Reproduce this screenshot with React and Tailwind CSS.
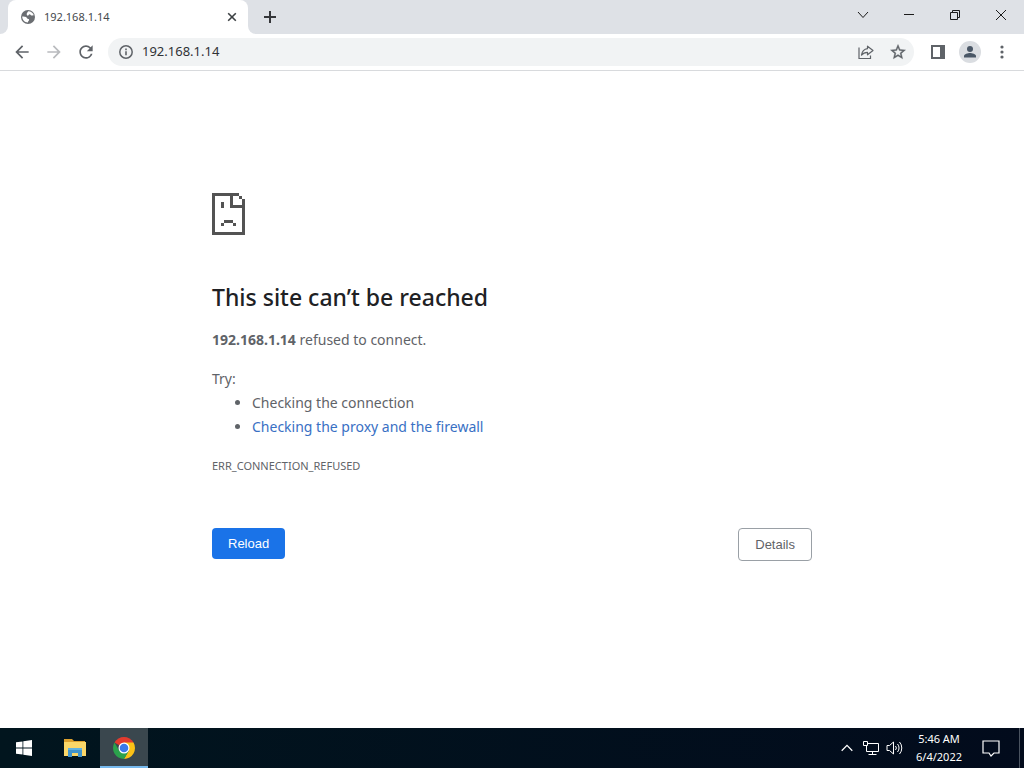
import React from "react";

const iconButton =
  "flex h-8 w-8 shrink-0 items-center justify-center text-[#5f6368]";
const windowButton =
  "flex h-[30px] w-[46px] shrink-0 items-center justify-center text-[#1b1b1b]";

function ToolIcon({ d, size = 20, className = "" }) {
  return (
    <svg width={size} height={size} viewBox="0 0 24 24" fill="currentColor" className={className} aria-hidden="true">
      <path d={d} />
    </svg>
  );
}

function TabStrip() {
  return (
    <header className="flex h-[34px] items-start bg-[#dee1e6]">
      <div className="w-2 self-stretch bg-white">
        <div className="h-full rounded-br-lg bg-[#dee1e6]" />
      </div>
      <div className="flex h-[34px] w-60 items-center rounded-t-lg bg-white pl-3 pr-2">
        <svg width="16" height="16" viewBox="0 0 16 16" aria-hidden="true">
          <circle cx="8" cy="8" r="7" fill="#6b6e72" />
          <path d="M8.200 2.200c2.800 0 5 1.800 5.700 4.200-.9-.4-1.700.3-2.500.1-.9-.2-.9-1.200-1.800-1.200-1 0-.6 1.100-1.500 1.300-.9.200-1.300-.5-1.400-1.300-.1-1.300.9-2 1.500-3.100zM2.200 7.600c1.300-.2 3 0 3.900.5.900.5.500 1.300 1.500 1.600.9.300 1.500.1 1.500 1 0 1-1.100 1.200-1.200 2.900-3.300 0-5.700-2.800-5.700-6z" fill="#fff" />
        </svg>
        <span className="ml-2 flex-1 font-['Noto_Sans',sans-serif] text-[11px] text-[#45494d]">192.168.1.14</span>
        <button type="button" aria-label="Close tab" className="flex h-4 w-4 items-center justify-center text-[#3c4043]">
          <svg width="10" height="10" viewBox="0 0 10 10" stroke="currentColor" strokeWidth="1.600" aria-hidden="true">
            <path d="M1.200 1.200l7.600 7.600M8.800 1.200L1.200 8.800" />
          </svg>
        </button>
      </div>
      <div className="w-2 self-stretch bg-white">
        <div className="h-full rounded-bl-lg bg-[#dee1e6]" />
      </div>
      <button type="button" aria-label="New tab" className="flex h-[34px] w-7 items-center justify-center text-[#35363a]">
        <svg width="12" height="12" viewBox="0 0 12 12" stroke="currentColor" strokeWidth="2" aria-hidden="true">
          <path d="M6 0v12M0 6h12" />
        </svg>
      </button>
      <div className="ml-auto flex">
        <button type="button" aria-label="Search tabs" className={windowButton}>
          <svg width="12" height="12" viewBox="0 0 12 12" fill="none" stroke="currentColor" aria-hidden="true">
            <path d="M1 3l5 5.500L11 3" />
          </svg>
        </button>
        <button type="button" aria-label="Minimize" className={windowButton}>
          <svg width="10" height="10" viewBox="0 0 10 10" stroke="currentColor" aria-hidden="true">
            <path d="M0 4.500h10" />
          </svg>
        </button>
        <button type="button" aria-label="Restore" className={windowButton}>
          <svg width="10" height="10" viewBox="0 0 10 10" fill="none" stroke="currentColor" aria-hidden="true">
            <path d="M.5 2.500h7v7h-7zM2.500 2.500v-2h7v7h-2" />
          </svg>
        </button>
        <button type="button" aria-label="Close" className={windowButton}>
          <svg width="10" height="10" viewBox="0 0 10 10" stroke="currentColor" aria-hidden="true">
            <path d="M0 0l10 10M10 0L0 10" />
          </svg>
        </button>
      </div>
    </header>
  );
}

function Toolbar() {
  return (
    <nav className="flex h-[37px] items-center border-b border-[#d8dadd] bg-white px-1.5">
      <button type="button" aria-label="Back" className={iconButton}>
        <ToolIcon d="M20 11H7.830l5.590-5.590L12 4l-8 8 8 8 1.410-1.410L7.830 13H20v-2z" />
      </button>
      <button type="button" aria-label="Forward" className={iconButton}>
        <ToolIcon className="text-[#b9bbbe]" d="M12 4l-1.410 1.410L16.170 11H4v2h12.170l-5.580 5.590L12 20l8-8z" />
      </button>
      <button type="button" aria-label="Reload" className={iconButton}>
        <ToolIcon d="M17.650 6.350A7.958 7.958 0 0 0 12 4c-4.420 0-7.990 3.580-7.990 8s3.570 8 7.990 8c3.730 0 6.840-2.550 7.730-6h-2.080A5.990 5.990 0 0 1 12 18c-3.310 0-6-2.690-6-6s2.690-6 6-6c1.660 0 3.140.69 4.220 1.780L13 11h7V4l-2.350 2.350z" />
      </button>
      <div className="ml-1.5 flex h-7 min-w-0 flex-1 items-center rounded-full bg-[#f1f3f4] pl-2.5">
        <svg width="16" height="16" viewBox="0 0 16 16" aria-hidden="true">
          <circle cx="8" cy="8" r="6.200" fill="none" stroke="#5f6368" strokeWidth="1.500" />
          <path d="M7.200 7.200h1.600v4H7.200zM7.200 4.600h1.600v1.600H7.200z" fill="#5f6368" />
        </svg>
        <input
          type="text"
          aria-label="Address"
          defaultValue="192.168.1.14"
          className="ml-2 min-w-0 flex-1 bg-transparent font-['Noto_Sans',sans-serif] text-[13px] text-[#303236] outline-none"
        />
        <button type="button" aria-label="Share this page" className={iconButton}>
          <svg width="18" height="18" viewBox="0 0 18 18" fill="none" stroke="currentColor" strokeWidth="1.200" aria-hidden="true">
            <path d="M2 4.500v11h11.500v-3" />
            <path d="M10.500 3.200L16 7.500l-5.500 4.300V9.300c-2.800 0-4.500.8-6 2.900.5-3.500 2.300-6 6-6.500z" strokeLinejoin="round" />
          </svg>
        </button>
        <button type="button" aria-label="Bookmark this tab" className={iconButton}>
          <svg width="18" height="18" viewBox="0 0 24 24" fill="currentColor" stroke="currentColor" strokeWidth=".5" aria-hidden="true">
            <path d="M22 9.240l-7.190-.62L12 2 9.190 8.630 2 9.240l5.460 4.730L5.820 21 12 17.270 18.180 21l-1.630-7.030L22 9.240zM12 15.400l-3.760 2.270 1-4.280-3.320-2.880 4.380-.38L12 6.100l1.710 4.040 4.380.38-3.320 2.880 1 4.280L12 15.400z" />
          </svg>
        </button>
      </div>
      <button type="button" aria-label="Side panel" className={`ml-2 ${iconButton}`}>
        <svg width="14" height="14" viewBox="0 0 14 14" aria-hidden="true">
          <path d="M1 1h12v12H1z" fill="none" stroke="currentColor" strokeWidth="2" />
          <path d="M9 0h5v14H9z" fill="currentColor" />
        </svg>
      </button>
      <button type="button" aria-label="Profile" className={iconButton}>
        <svg width="22" height="22" viewBox="0 0 22 22" aria-hidden="true">
          <circle cx="11" cy="11" r="11" fill="#dadde1" />
          <circle cx="11" cy="8" r="3" fill="#4a5766" />
          <path d="M5 16.500V15c0-2 4-3 6-3s6 1 6 3v1.500z" fill="#4a5766" />
        </svg>
      </button>
      <button type="button" aria-label="Menu" className={iconButton}>
        <svg width="4" height="14" viewBox="0 0 4 14" fill="currentColor" aria-hidden="true">
          <circle cx="2" cy="2" r="1.600" />
          <circle cx="2" cy="7" r="1.600" />
          <circle cx="2" cy="12" r="1.600" />
        </svg>
      </button>
    </nav>
  );
}

function ErrorPage() {
  return (
    <main className="flex-1 bg-white px-6 font-['Noto_Sans',sans-serif] text-[14px] leading-6 text-[#5f6368]">
      <div className="mx-auto max-w-[600px] pt-[122px]">
        <svg width="33" height="42" viewBox="0 0 11 14" fill="#535353" shapeRendering="crispEdges" aria-hidden="true">
          <path d="M0 0h9v1H7v3h3V2h1v12H0zM1 1v12h9V5H6V1z" fillRule="evenodd" />
          <path d="M9 1h1v1H9zM3 3h1v2H3zM4 9h3v1H4zM3 10h1v1H3zM7 10h1v1H7z" />
        </svg>
        <h1 className="mt-[46px] text-[23px] font-medium leading-8 text-[#202124]">This site can’t be reached</h1>
        <p className="mt-[15px]">
          <strong className="font-bold">192.168.1.14</strong> refused to connect.
        </p>
        <p className="mt-[15px]">Try:</p>
        <ul className="list-disc pl-10">
          <li>Checking the connection</li>
          <li>
            <a href="#proxy" className="text-[#3970c4]">Checking the proxy and the firewall</a>
          </li>
        </ul>
        <p className="mt-[15px] text-[11px]">ERR_CONNECTION_REFUSED</p>
        <div className="mt-[50px] flex items-start justify-between font-['Liberation_Sans',sans-serif] text-[13px] leading-[15px]">
          <button type="button" className="rounded bg-[#1a73e8] px-4 py-2 text-white">Reload</button>
          <button type="button" className="rounded border border-[#9aa0a6] px-4 py-2">Details</button>
        </div>
      </div>
    </main>
  );
}

function Taskbar() {
  return (
    <footer className="flex h-10 items-stretch bg-[#01121c] bg-linear-to-r from-[#01151e] to-[#020b1c] text-white">
      <button type="button" aria-label="Start" className="flex w-12 items-center justify-center">
        <svg width="16" height="16" viewBox="0 0 16 16" fill="#fff" aria-hidden="true">
          <path d="M0 2.300l6.500-.9v6.200H0zM7.300 1.300L16 0v7.600H7.300zM0 8.400h6.500v6.200L0 13.700zM7.300 8.400H16V16l-8.700-1.300z" />
        </svg>
      </button>
      <button type="button" aria-label="File Explorer" className="ml-1 flex w-12 items-center justify-center pr-0.5">
        <svg width="22" height="20" viewBox="0 0 22 20" aria-hidden="true">
          <path d="M0 1h8l2 2h11v5H0z" fill="#dda12e" />
          <path d="M0 4h22v14H0z" fill="#fbd768" />
          <path d="M4 10h14v9h-4v-4H8v4H4z" fill="#4194cb" />
          <path d="M4 10h14v2H4z" fill="#61b2df" />
        </svg>
      </button>
      <button type="button" aria-label="Google Chrome" className="flex w-12 items-center justify-center border-b-2 border-[#76b9ed] bg-[#3a474e] pt-0.5">
        <svg width="22" height="22" viewBox="0 0 24 24" aria-hidden="true">
          <path d="M12 12L1.610 6A12 12 0 0 1 22.390 6z" fill="#e33b2e" />
          <path d="M12 6h10.390A12 12 0 0 1 12 24l5.200-9z" fill="#fbc116" />
          <path d="M6.800 15L1.610 6A12 12 0 0 0 12 24l5.200-9z" fill="#2ba24c" />
          <circle cx="12" cy="12" r="6" fill="#fff" />
          <circle cx="12" cy="12" r="4.700" fill="#3b79e8" />
        </svg>
      </button>
      <div className="ml-auto flex items-center">
        <button type="button" aria-label="Show hidden icons" className="flex w-6 items-center justify-center">
          <svg width="12" height="8" viewBox="0 0 12 8" fill="none" stroke="#fff" strokeWidth="1.300" aria-hidden="true">
            <path d="M.7 6.700L6 1.400l5.300 5.300" />
          </svg>
        </button>
        <button type="button" aria-label="Network" className="flex w-6 items-center justify-center">
          <svg width="16" height="16" viewBox="0 0 16 16" fill="none" stroke="#fff" aria-hidden="true">
            <path d="M5 3.500h10.500v8H3.500V5.500M9.500 11.500v3M5.500 14.500h8M.5 1.500h4v4h-4z" />
          </svg>
        </button>
        <button type="button" aria-label="Volume" className="flex w-6 items-center justify-center">
          <svg width="18" height="16" viewBox="0 0 18 16" fill="none" stroke="#fff" aria-hidden="true">
            <path d="M1 5.500h2.500L7.500 2v12l-4-3.500H1zM9.500 6a3 3 0 0 1 0 4M11.500 4a6 6 0 0 1 0 8M13.500 2a9 9 0 0 1 0 12" />
          </svg>
        </button>
        <button type="button" className="w-16 text-center font-['Noto_Sans',sans-serif] text-[11px] leading-[18px]">
          <span className="block">5:46 AM</span>
          <span className="block">6/4/2022</span>
        </button>
        <button type="button" aria-label="Notifications" className="flex w-10 items-center justify-center">
          <svg width="18" height="18" viewBox="0 0 18 18" fill="none" stroke="#fff" strokeWidth="1.200" aria-hidden="true">
            <path d="M1 2h16v12h-5l-3 3-2-3H1z" />
          </svg>
        </button>
        <button type="button" aria-label="Show desktop" className="ml-2 h-10 w-[5px] border-l border-[#4a5360]" />
      </div>
    </footer>
  );
}

export default function App() {
  return (
    <div className="flex min-h-screen flex-col bg-white">
      <TabStrip />
      <Toolbar />
      <ErrorPage />
      <Taskbar />
    </div>
  );
}
